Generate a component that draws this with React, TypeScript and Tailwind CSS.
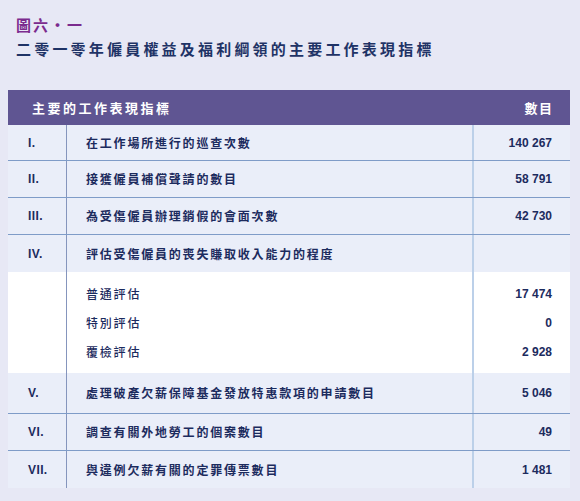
import React from "react"

const cjk = "font-['Noto_Sans_CJK_TC',sans-serif]"
const latin = "font-['Liberation_Sans','Noto_Sans_CJK_TC',sans-serif]"

type Row = { no: string; label: string; value: string; h: string }

const topRows: Row[] = [
  { no: "I.", label: "在工作場所進行的巡查次數", value: "140 267", h: "h-[35px]" },
  { no: "II.", label: "接獲僱員補償聲請的數目", value: "58 791", h: "h-[36px]" },
  { no: "III.", label: "為受傷僱員辦理銷假的會面次數", value: "42 730", h: "h-[36px]" },
]

const bottomRows: Row[] = [
  { no: "V.", label: "處理破產欠薪保障基金發放特惠款項的申請數目", value: "5 046", h: "h-[40px]" },
  { no: "VI.", label: "調查有關外地勞工的個案數目", value: "49", h: "h-[36px]" },
  { no: "VII.", label: "與違例欠薪有關的定罪傳票數目", value: "1 481", h: "h-[37px]" },
]

const subRows = [
  { label: "普通評估", value: "17 474" },
  { label: "特別評估", value: "0" },
  { label: "覆檢評估", value: "2 928" },
]

function TableRow({ row, last }: { row: Row; last?: boolean }) {
  return (
    <div
      className={`grid grid-cols-[59px_405px_98px] bg-[#eaeef9] ${row.h} ${
        last ? "" : "border-b border-[#7f9cc8]"
      } box-content`}
    >
      <div className={`flex items-center pl-5 border-r border-[#8595bd] text-[12px] font-bold tracking-[0.4px] text-[#1c2b5e] ${latin}`}>
        {row.no}
      </div>
      <div className={`flex items-center pl-[19px] text-[12px] font-bold tracking-[1.8px] text-[#1c2b5e] ${cjk}`}>
        {row.label}
      </div>
      <div className={`flex items-center justify-end pr-[18px] border-l-2 border-[#bcd0e9] text-[12px] font-bold text-[#1c2b5e] ${latin}`}>
        {row.value}
      </div>
    </div>
  )
}

export default function App() {
  return (
    <div className="w-[580px] h-[501px] bg-[#e7e8f5] overflow-hidden">
      {/* Title */}
      <div className="pl-4 pt-[15px]">
        <div className={`text-[15px] leading-[20px] font-bold tracking-[2px] text-[#7b2b8e] ${cjk}`}>
          圖六・一
        </div>
        <div className={`mt-1 text-[15px] leading-[20px] font-bold tracking-[3.2px] text-[#1f3366] ${cjk}`}>
          二零一零年僱員權益及福利綱領的主要工作表現指標
        </div>
      </div>

      {/* Table */}
      <div className="ml-2 mt-[31px] w-[562px]">
        <div className={`flex items-center justify-between h-[35px] bg-[#5f5592] pl-6 pr-[18px] text-white text-[13px] font-bold ${cjk}`}>
          <span className="tracking-[2.5px]">主要的工作表現指標</span>
          <span className="tracking-[1.5px] -mr-[1.5px]">數目</span>
        </div>

        {topRows.map((r) => (
          <TableRow key={r.no} row={r} />
        ))}
        <TableRow row={{ no: "IV.", label: "評估受傷僱員的喪失賺取收入能力的程度", value: "", h: "h-[37px]" }} last />

        {/* Sub rows */}
        <div className="grid grid-cols-[59px_405px_98px] bg-white h-[101px]">
          <div className="border-r border-[#8595bd]" />
          <div className="pt-[7px] pl-[19px]">
            {subRows.map((s) => (
              <div key={s.label} className={`h-[29px] flex items-center text-[12px] font-medium tracking-[1.8px] text-[#1c2b5e] ${cjk}`}>
                {s.label}
              </div>
            ))}
          </div>
          <div className="pt-[7px] pr-[18px] border-l-2 border-[#bcd0e9]">
            {subRows.map((s) => (
              <div key={s.label} className={`h-[29px] flex items-center justify-end text-[12px] font-bold text-[#1c2b5e] ${latin}`}>
                {s.value}
              </div>
            ))}
          </div>
        </div>

        {bottomRows.map((r, i) => (
          <TableRow key={r.no} row={r} last={i === bottomRows.length - 1} />
        ))}
      </div>
    </div>
  )
}
